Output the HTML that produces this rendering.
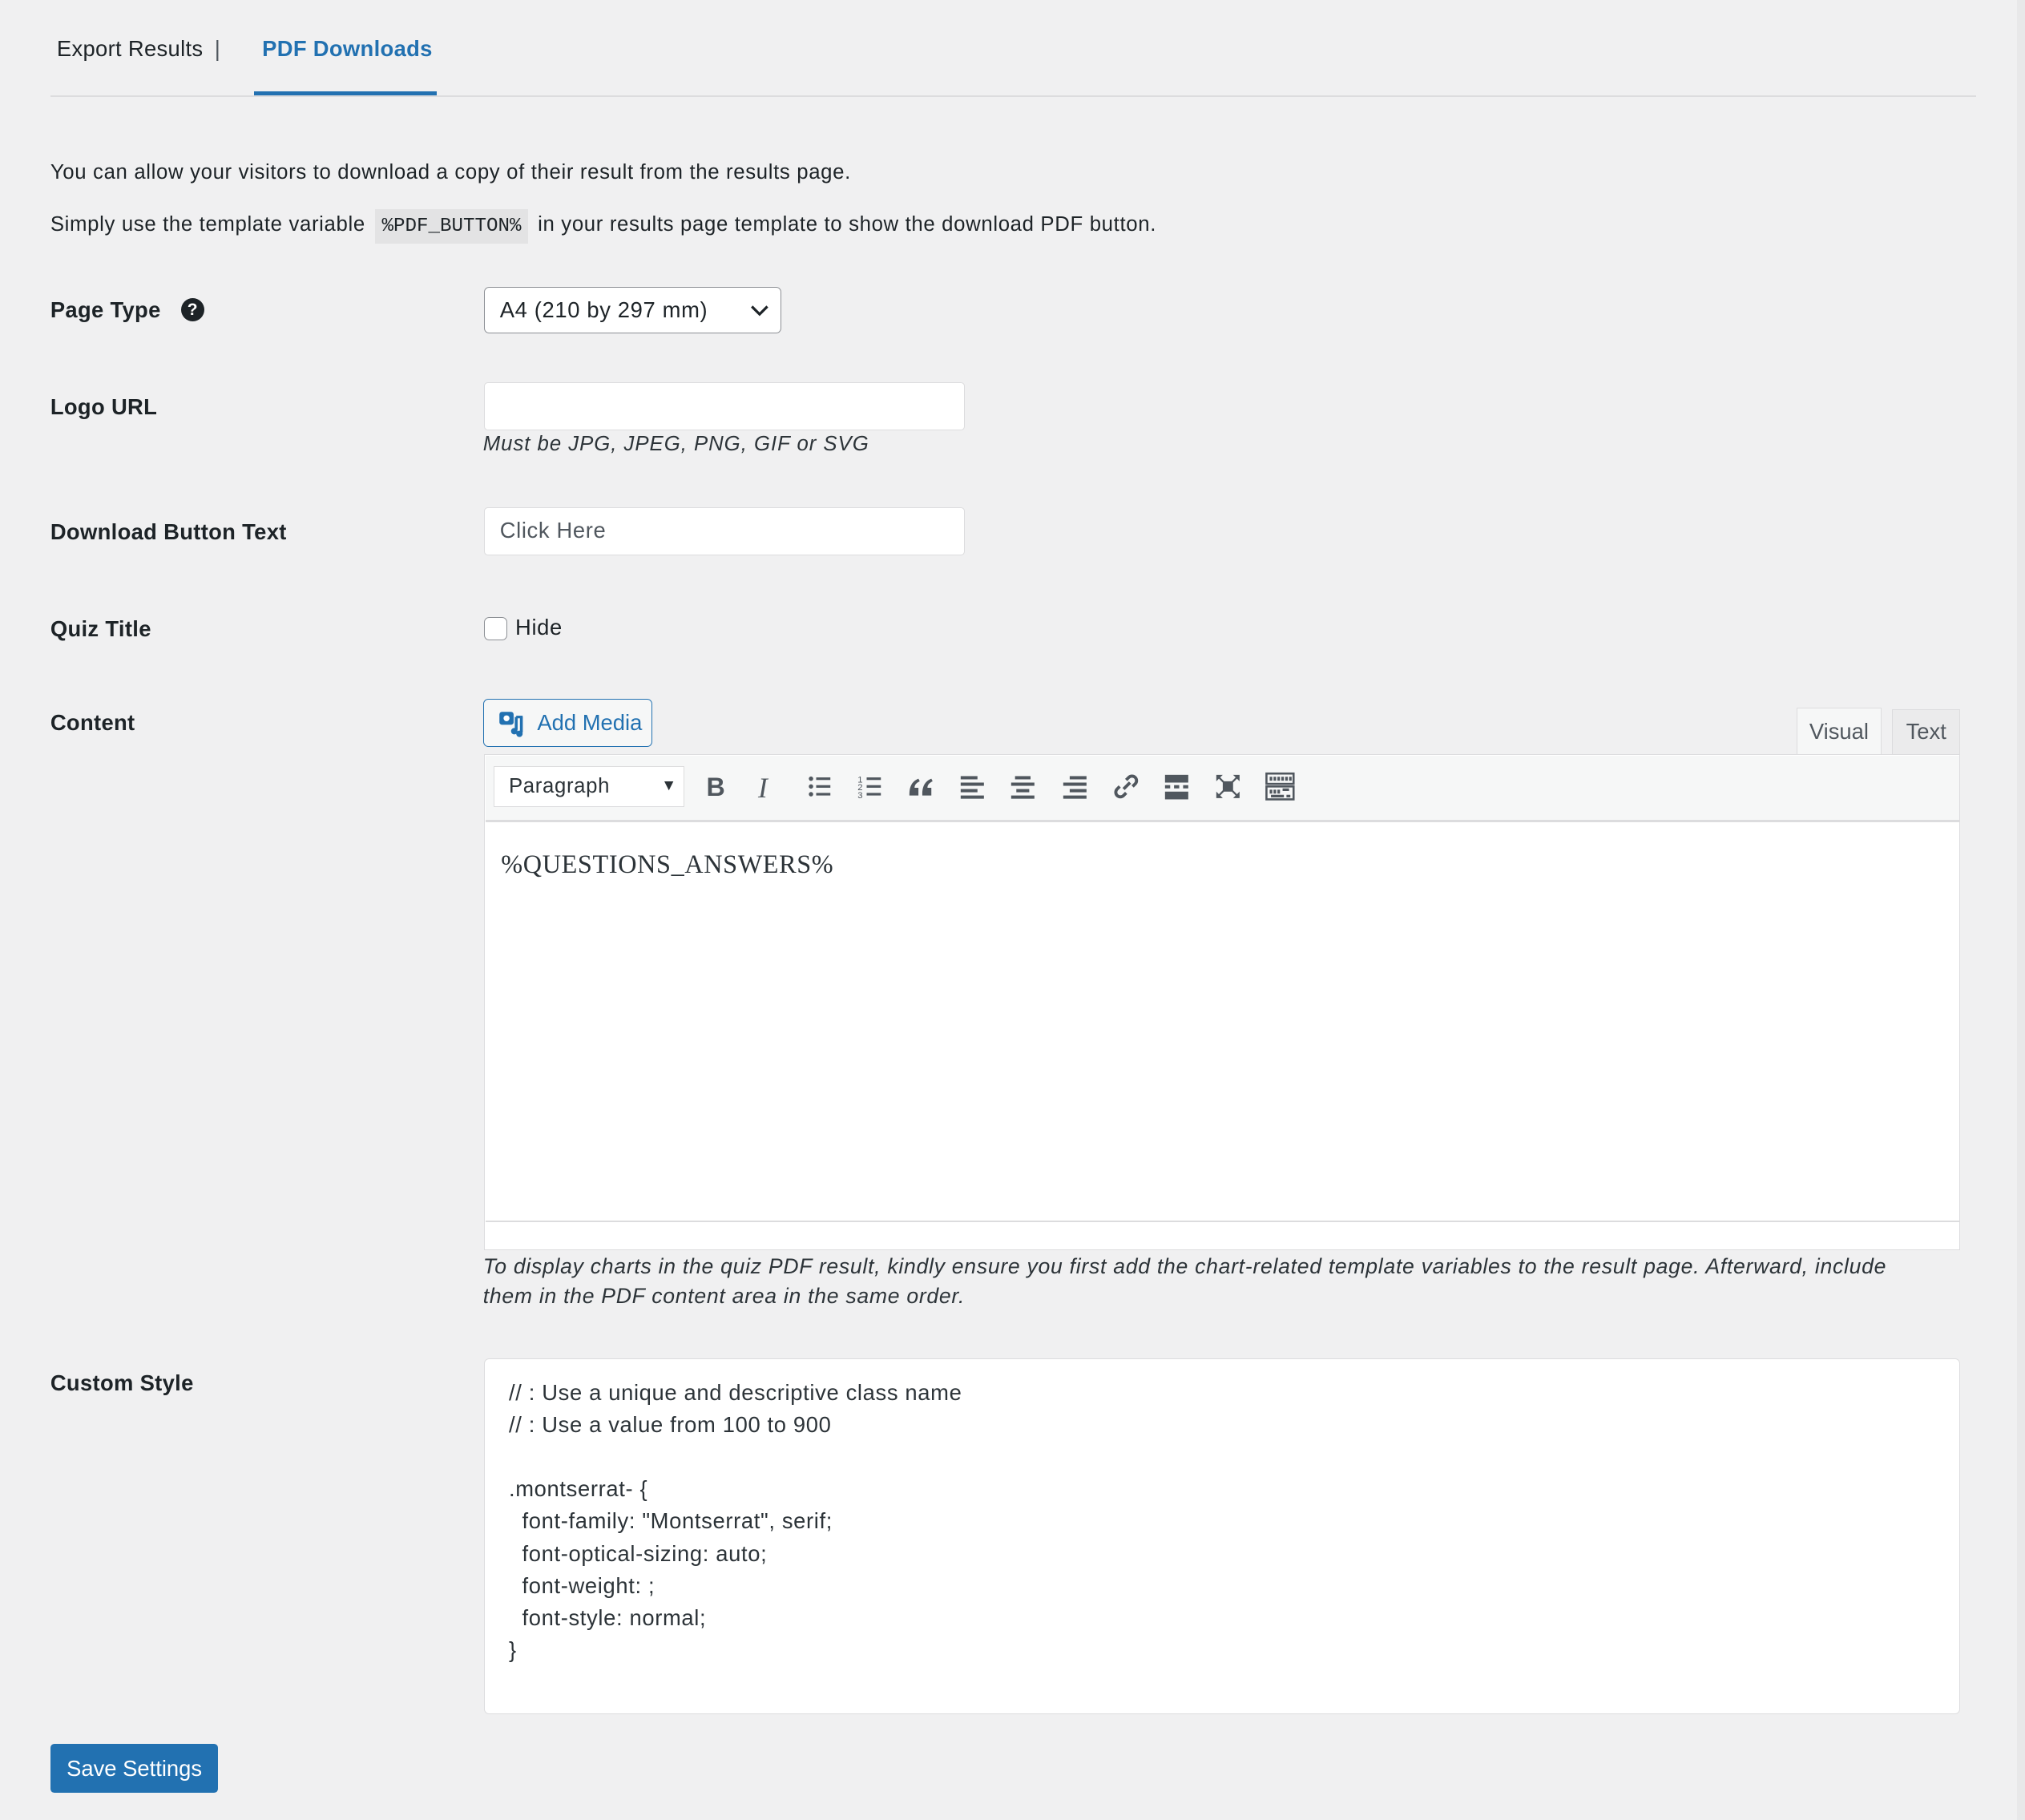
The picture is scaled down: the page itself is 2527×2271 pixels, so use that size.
<!DOCTYPE html>
<html><head><meta charset="utf-8">
<style>
html,body{margin:0;padding:0;}
body{width:1568px;height:1409px;zoom:1.61161;background:#f0f0f1;font-family:"Liberation Sans",sans-serif;color:#1d2327;position:relative;overflow:hidden;font-size:16px;letter-spacing:0.4px;}
.a{position:absolute;white-space:nowrap;}
.lbl{font-weight:bold;font-size:17px;line-height:20px;letter-spacing:0.2px;}
.inp{position:absolute;background:#fff;border:1px solid #c3c4c7;border-radius:3px;box-sizing:border-box;}
.ic{position:absolute;top:597px;width:24px;height:24px;}
</style></head><body>
<div class="a" style="left:44px;top:28px;font-size:17px;letter-spacing:0.2px">Export Results <span style="margin-left:4px;color:#50575e">|</span></div>
<div class="a" style="left:203px;top:28px;font-size:17px;color:#2271b1;font-weight:bold;letter-spacing:0.2px">PDF Downloads</div>
<div class="a" style="left:197px;top:71px;width:141px;height:3px;background:#2271b1"></div>
<div class="a" style="left:39px;top:74px;width:1491px;height:1px;background:#dcdcde"></div>
<div class="a" style="left:1562px;top:0;width:6px;height:1409px;background:#e8e8e9"></div>

<div class="a" style="left:39px;top:125px;">You can allow your visitors to download a copy of their result from the results page.</div>
<div class="a" style="left:39px;top:165px;">Simply use the template variable <span style="background:#e3e3e4;font-family:'Liberation Mono',monospace;font-size:15px;padding:5px 5px;margin:0 3px;letter-spacing:0">%PDF_BUTTON%</span> in your results page template to show the download PDF button.</div>

<div class="a lbl" style="left:39px;top:230px;">Page Type</div>
<div class="a" style="left:140px;top:231px;width:18px;height:18px;border-radius:50%;background:#1d2327;color:#fff;font-size:13px;font-weight:bold;text-align:center;line-height:18px;letter-spacing:0">?</div>
<div class="inp" style="left:375px;top:222px;width:230px;height:36px;border-color:#8c8f94;border-radius:4px;"></div>
<div class="a" style="left:387px;top:230px;font-size:17px;">A4 (210 by 297 mm)</div>
<svg class="a" style="left:580px;top:233px" width="16" height="14" viewBox="0 0 16 14"><path d="M2 4l6 6 6-6" fill="none" stroke="#1d2327" stroke-width="2"/></svg>

<div class="a lbl" style="left:39px;top:305px;">Logo URL</div>
<div class="inp" style="left:375px;top:296px;width:372px;height:37px;border-color:#dcdcde"></div>
<div class="a" style="left:374px;top:335px;font-style:italic;font-size:16px;color:#2c3338;letter-spacing:0.6px">Must be JPG, JPEG, PNG, GIF or SVG</div>

<div class="a lbl" style="left:39px;top:402px;">Download Button Text</div>
<div class="inp" style="left:375px;top:393px;width:372px;height:37px;border-color:#dcdcde"></div>
<div class="a" style="left:387px;top:401px;font-size:17px;color:#50575e">Click Here</div>

<div class="a lbl" style="left:39px;top:477px;">Quiz Title</div>
<div class="a" style="left:375px;top:478px;width:18px;height:18px;border:1px solid #8c8f94;border-radius:4px;background:#fff;box-sizing:border-box"></div>
<div class="a" style="left:399px;top:476px;font-size:17px;">Hide</div>

<div class="a lbl" style="left:39px;top:550px;">Content</div>
<div class="a" style="left:374px;top:541px;width:131px;height:37px;border:1px solid #2271b1;border-radius:4px;box-sizing:border-box;background:#f6f7f7"></div>
<svg class="a" style="left:385px;top:549px" width="24" height="22" viewBox="0 0 24 22"><rect x="2" y="2" width="11" height="10" rx="2" fill="#2271b1"/><circle cx="7.5" cy="7" r="2.3" fill="#fff"/><path d="M15 6v10M19 6v12" stroke="#2271b1" stroke-width="2.2"/><circle cx="13.5" cy="17" r="2.5" fill="#2271b1"/><circle cx="17.5" cy="19" r="2.5" fill="#2271b1"/><rect x="15" y="5" width="5" height="2" fill="#2271b1"/></svg>
<div class="a" style="left:416px;top:550px;font-size:17px;color:#2271b1;letter-spacing:0">Add Media</div>

<div class="a" style="left:1465px;top:549px;width:53px;height:35px;background:#ebebec;border:1px solid #dcdcde;border-bottom:none;box-sizing:border-box;font-size:17px;color:#50575e;text-align:center;line-height:34px;letter-spacing:0">Text</div>
<div class="a" style="left:1391px;top:548px;width:66px;height:37px;background:#f6f7f7;border:1px solid #dcdcde;border-bottom:none;box-sizing:border-box;font-size:17px;color:#50575e;text-align:center;line-height:36px;letter-spacing:0">Visual</div>

<div class="a" style="left:375px;top:584px;width:1143px;height:384px;border:1px solid #dcdcde;box-sizing:border-box;background:#fff"></div>
<div class="a" style="left:376px;top:585px;width:1141px;height:50px;background:#f6f7f7;border-bottom:2px solid #dcdcde"></div>
<div class="a" style="left:382px;top:593px;width:148px;height:32px;background:#fff;border:1px solid #dcdcde;box-sizing:border-box"></div>
<div class="a" style="left:394px;top:600px;font-size:16px;color:#2c3338">Paragraph</div>
<div class="a" style="left:512px;top:602px;font-size:12px;color:#2c3338">▼</div>
<div class="a" style="left:547px;top:598px;font-size:20px;font-weight:bold;color:#50575e">B</div>
<div class="a" style="left:587px;top:597px;font-size:22px;font-style:italic;font-family:'Liberation Serif',serif;color:#50575e">I</div>
<svg class="ic" style="left:623px" viewBox="0 0 24 24" fill="#50575e"><circle cx="5" cy="6" r="1.7"/><circle cx="5" cy="12" r="1.7"/><circle cx="5" cy="18" r="1.7"/><rect x="9" y="5" width="11" height="2"/><rect x="9" y="11" width="11" height="2"/><rect x="9" y="17" width="11" height="2"/></svg>
<svg class="ic" style="left:662px" viewBox="0 0 24 24" fill="#50575e"><text x="2" y="9" font-size="7" font-family="Liberation Sans">1</text><text x="2" y="15" font-size="7" font-family="Liberation Sans">2</text><text x="2" y="21" font-size="7" font-family="Liberation Sans">3</text><rect x="9" y="5" width="11" height="2"/><rect x="9" y="11" width="11" height="2"/><rect x="9" y="17" width="11" height="2"/></svg>
<svg class="ic" style="left:701px" viewBox="0 0 24 24" fill="#50575e"><path d="M3 18c0-6 2-10 7-12l1 2c-3 1.5-4 3-4 5h3v6H3zM13 18c0-6 2-10 7-12l1 2c-3 1.5-4 3-4 5h3v6h-7z"/></svg>
<svg class="ic" style="left:741px" viewBox="0 0 24 24" fill="#50575e"><rect x="3" y="4" width="13" height="2.5"/><rect x="3" y="9" width="18" height="2.5"/><rect x="3" y="14" width="13" height="2.5"/><rect x="3" y="19" width="18" height="2.5"/></svg>
<svg class="ic" style="left:780px" viewBox="0 0 24 24" fill="#50575e"><rect x="6" y="4" width="12" height="2.5"/><rect x="3" y="9" width="18" height="2.5"/><rect x="7" y="14" width="10" height="2.5"/><rect x="3" y="19" width="18" height="2.5"/></svg>
<svg class="ic" style="left:820px" viewBox="0 0 24 24" fill="#50575e"><rect x="8" y="4" width="13" height="2.5"/><rect x="3" y="9" width="18" height="2.5"/><rect x="8" y="14" width="13" height="2.5"/><rect x="3" y="19" width="18" height="2.5"/></svg>
<svg class="ic" style="left:860px" viewBox="0 0 24 24" fill="none" stroke="#50575e" stroke-width="2.4"><path d="M10 14l5-5"/><path d="M12 7l2-2a3.5 3.5 0 015 5l-2 2"/><path d="M12 17l-2 2a3.5 3.5 0 01-5-5l2-2"/></svg>
<svg class="ic" style="left:899px" viewBox="0 0 24 24" fill="#50575e"><rect x="3" y="3" width="18" height="6"/><rect x="3" y="11" width="4" height="2.5"/><rect x="10" y="11" width="4" height="2.5"/><rect x="17" y="11" width="4" height="2.5"/><rect x="3" y="16" width="18" height="6"/></svg>
<svg class="ic" style="left:939px" viewBox="0 0 24 24" fill="#50575e"><rect x="8" y="8" width="8" height="8"/><path d="M3 3h5l-2 2 3 3-1 1-3-3-2 2zM21 3v5l-2-2-3 3-1-1 3-3-2-2zM3 21v-5l2 2 3-3 1 1-3 3 2 2zM21 21h-5l2-2-3-3 1-1 3 3 2-2z"/></svg>
<svg class="ic" style="left:979px" viewBox="0 0 24 24" fill="none" stroke="#50575e" stroke-width="1.6"><rect x="1.5" y="2" width="21" height="8"/><rect x="1.5" y="12" width="21" height="10"/><path d="M5 4.5v3M8 4.5v3M11 4.5v3M14 4.5v3M17 4.5v3M20 4.5v3M5 14.5v3M8 14.5v3M11 14.5v3M14 14.5h5M5 19.5h10M17 19.5h3" stroke-width="2"/></svg>

<div class="a" style="left:388px;top:658px;font-family:'Liberation Serif',serif;font-size:20px;color:#2c3338;letter-spacing:0.4px">%QUESTIONS_ANSWERS%</div>
<div class="a" style="left:376px;top:945px;width:1141px;height:1px;background:#dcdcde"></div>

<div class="a" style="left:374px;top:969px;font-style:italic;font-size:16.5px;color:#2c3338;line-height:23px;white-space:normal;width:1132px;letter-spacing:0.45px">To display charts in the quiz PDF result, kindly ensure you first add the chart-related template variables to the result page. Afterward, include<br>them in the PDF content area in the same order.</div>

<div class="a lbl" style="left:39px;top:1061px;">Custom Style</div>
<div class="inp" style="left:375px;top:1052px;width:1143px;height:275px;border-color:#dcdcde;border-radius:4px"></div>
<div class="a" style="left:394px;top:1066px;font-size:17px;line-height:24.9px;color:#2c3338;white-space:pre">// : Use a unique and descriptive class name
// : Use a value from 100 to 900

.montserrat- {
  font-family: "Montserrat", serif;
  font-optical-sizing: auto;
  font-weight: ;
  font-style: normal;
}</div>

<div class="a" style="left:39px;top:1350px;width:130px;height:38px;background:#2271b1;border-radius:3px;color:#fff;font-size:17px;text-align:center;line-height:38px;letter-spacing:0">Save Settings</div>
</body></html>
